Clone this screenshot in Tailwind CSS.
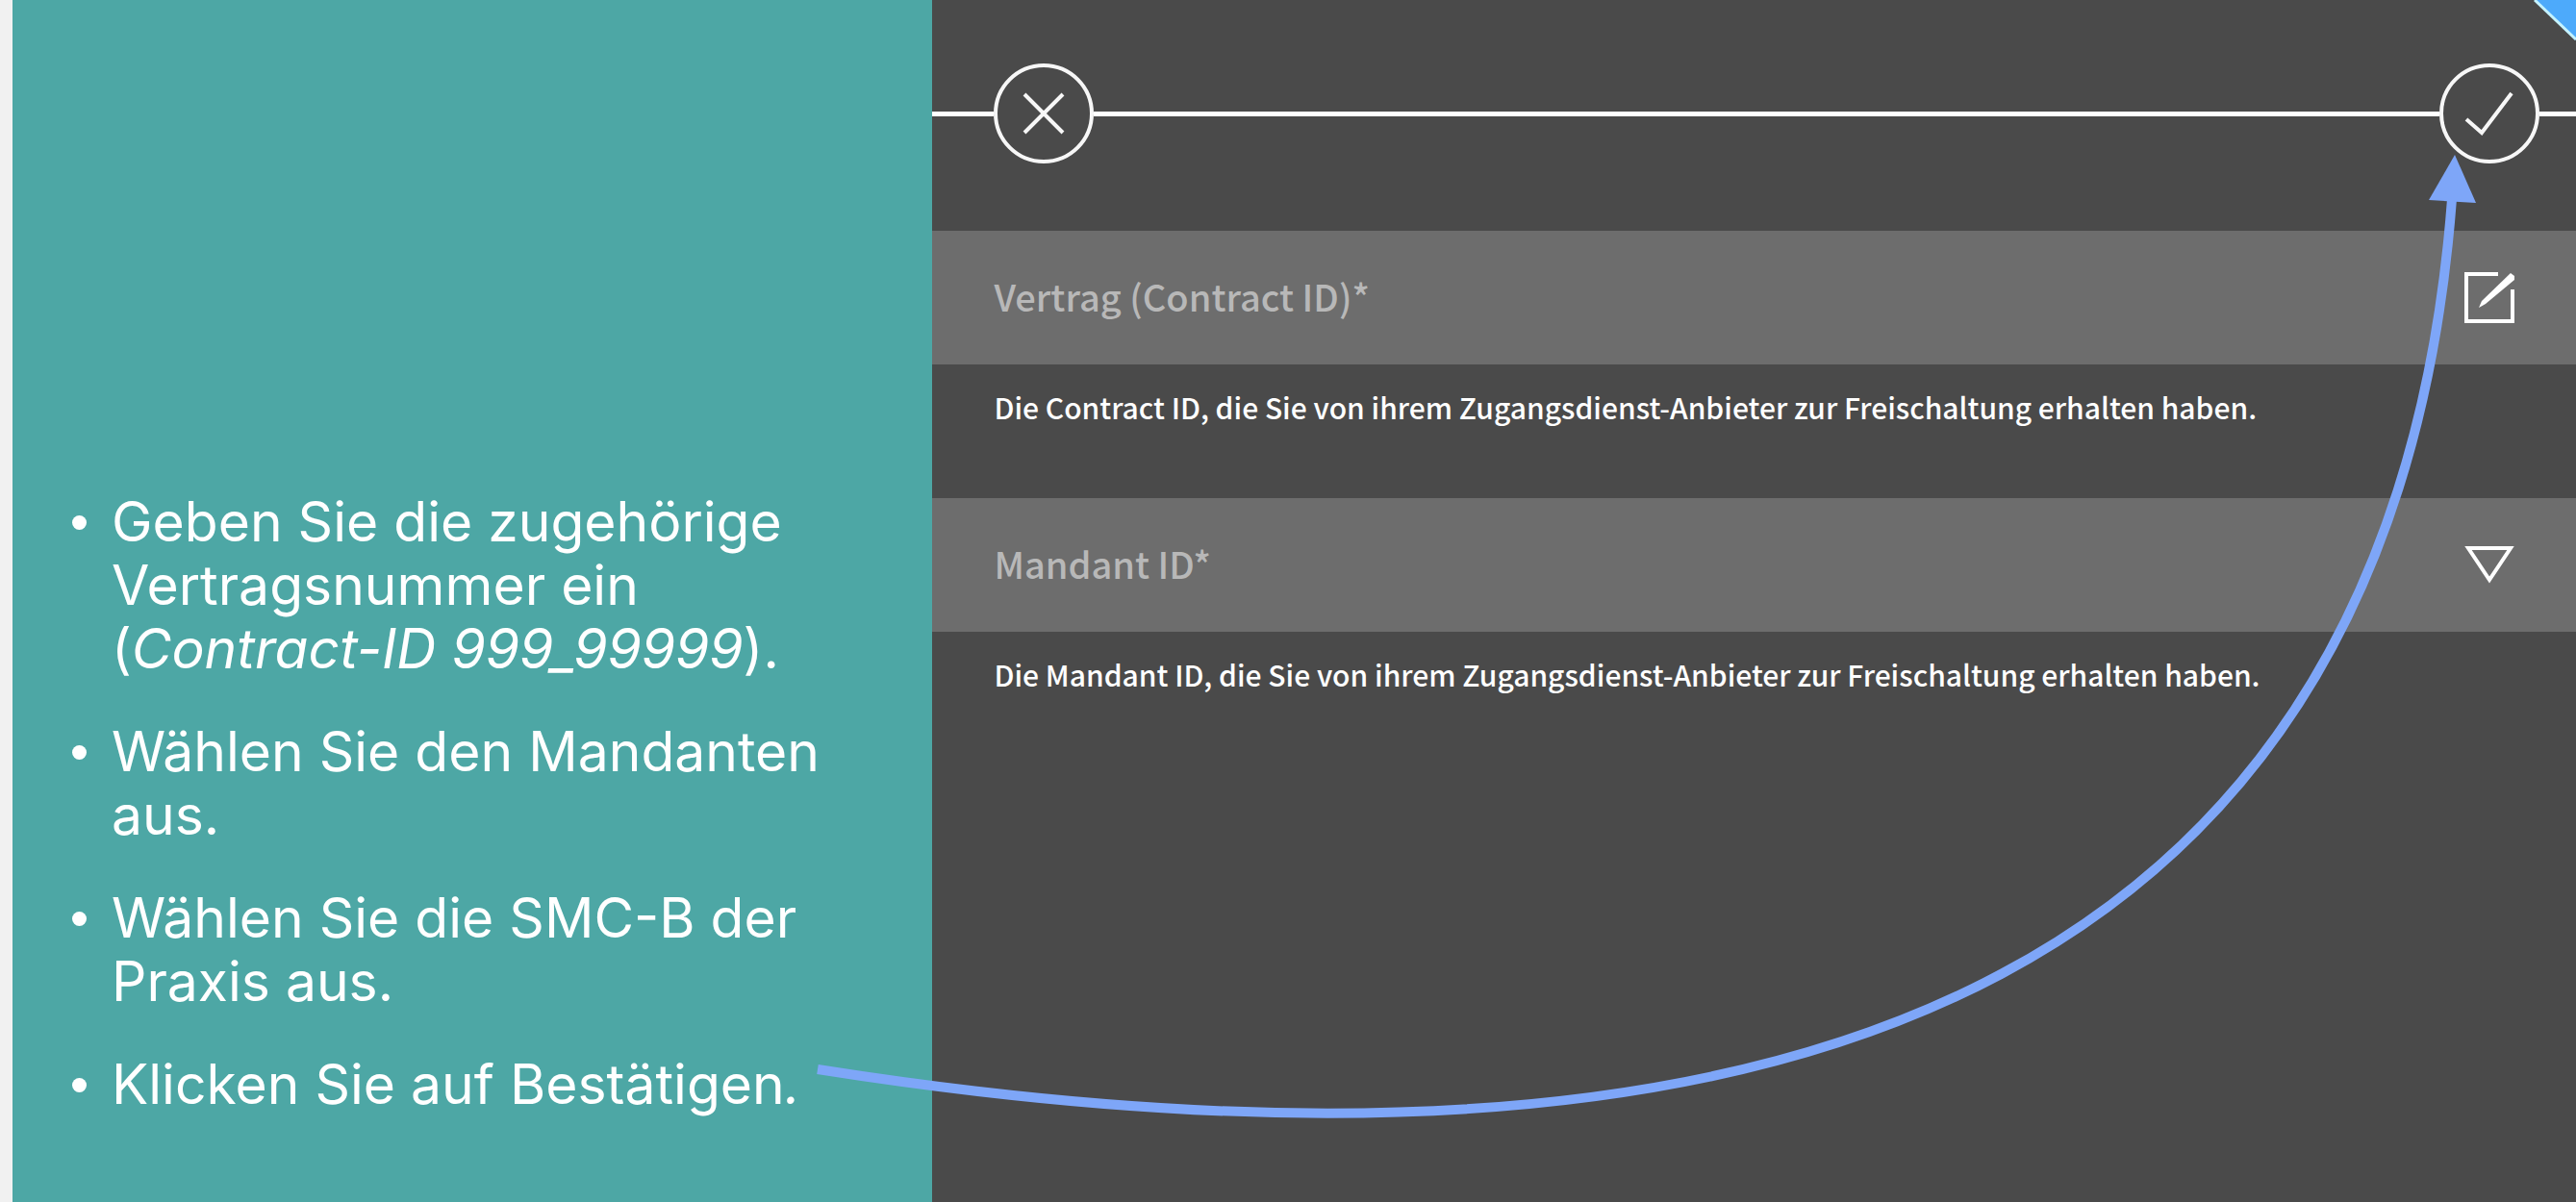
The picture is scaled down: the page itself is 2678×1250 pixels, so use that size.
<!DOCTYPE html>
<html lang="de">
<head>
<meta charset="utf-8">
<title>Vertrag und Mandant</title>
<script src="https://cdn.jsdelivr.net/npm/@tailwindcss/browser@4"></script>
</head>
<body class="relative flex min-h-screen overflow-x-hidden bg-[#4a4a4a] text-white">
  <aside class="flex w-[36.2%] shrink-0 flex-col justify-end border-l-[13px] border-[#f1f1f1] bg-[#4da7a5] pb-[89px] pl-[62px] pr-24 font-['Inter',sans-serif] text-[57px] leading-[66px]">
    <ul class="flex flex-col gap-[41px]">
      <li class="flex gap-[26px]"><span class="mt-[26px] size-[15px] shrink-0 rounded-full bg-white"></span><p>Geben Sie die zugehörige<br>Vertragsnummer ein<br>(<em>Contract-ID 999_99999</em>).</p></li>
      <li class="flex gap-[26px]"><span class="mt-[26px] size-[15px] shrink-0 rounded-full bg-white"></span><p class="whitespace-nowrap">Wählen Sie den Mandanten<br>aus.</p></li>
      <li class="flex gap-[26px]"><span class="mt-[26px] size-[15px] shrink-0 rounded-full bg-white"></span><p>Wählen Sie die SMC-B der<br>Praxis aus.</p></li>
      <li class="flex gap-[26px]"><span class="mt-[26px] size-[15px] shrink-0 rounded-full bg-white"></span><p class="whitespace-nowrap">Klicken Sie auf Bestätigen<em>.</em></p></li>
    </ul>
  </aside>

  <main class="min-w-0 flex-1 font-['Noto_Sans_CJK_JP',sans-serif] font-medium">
    <header class="flex h-[240px] items-center pb-1">
      <span class="h-[5px] w-16 bg-white"></span>
      <button type="button" aria-label="Abbrechen" class="size-[104px] shrink-0">
        <svg class="size-full" viewBox="0 0 104 104" fill="none" stroke="#f7f7f7" stroke-width="4"><circle cx="52" cy="52" r="50"/><path d="M32 32 72 72M72 32 32 72"/></svg>
      </button>
      <span class="h-[5px] flex-1 bg-white"></span>
      <button type="button" aria-label="Bestätigen" class="size-[104px] shrink-0">
        <svg class="size-full" viewBox="0 0 104 104" fill="none" stroke="#f7f7f7" stroke-width="4"><circle cx="52" cy="52" r="50"/><path d="M28 58 44 72 75 31"/></svg>
      </button>
      <span class="h-[5px] w-[38px] bg-white"></span>
    </header>

    <form>
      <div class="flex h-[139px] items-center bg-[#6d6d6d] pl-16 pr-16">
        <input id="contract" type="text" placeholder="Vertrag (Contract ID)*" class="h-full min-w-0 flex-1 bg-transparent pb-1 text-[38px] outline-none placeholder:text-[#b8b8b8]">
        <svg class="h-[53px] w-[52px] shrink-0" viewBox="0 0 52 53" fill="none" stroke="#fff" stroke-width="4"><path d="M35 2H2V51H50V18"/><path d="M48 1 52 4V8L22 33 15 37 18 30Z" fill="#fff" stroke="none"/></svg>
      </div>
      <label for="contract" class="flex h-[139px] pl-16 pt-5 text-[30px] leading-[48px]">Die Contract ID, die Sie von ihrem Zugangsdienst-Anbieter zur Freischaltung erhalten haben.</label>
      <div class="flex h-[139px] items-center bg-[#6d6d6d] pl-16 pr-16">
        <select id="mandant" class="h-full min-w-0 flex-1 appearance-none bg-transparent pb-1 text-[38px] text-[#b8b8b8] outline-none"><option>Mandant ID*</option></select>
        <svg class="h-[39px] w-[52px] shrink-0" viewBox="0 0 52 39" fill="none" stroke="#fff" stroke-width="4"><path d="M4 2H48L26 35Z"/></svg>
      </div>
      <label for="mandant" class="flex h-[139px] pl-16 pt-5 text-[30px] leading-[48px]">Die Mandant ID, die Sie von ihrem Zugangsdienst-Anbieter zur Freischaltung erhalten haben.</label>
    </form>
  </main>

  <!-- Corner ribbon -->
  <svg class="absolute right-0 top-0 h-[42px] w-[44px]" viewBox="0 0 44 42"><path d="M1 0H44V42Z" fill="#4daafb"/><path d="M1 0 44 41" stroke="#c5f3ff" stroke-width="3"/></svg>

  <!-- Arrow from the last step to the confirm button -->
  <svg class="pointer-events-none absolute inset-0 size-full" viewBox="0 0 2678 1250" preserveAspectRatio="none" fill="none">
    <path d="M850 1112Q2462 1366 2549 207" stroke="#7ea6f8" stroke-width="10"/>
    <path d="M2552 161 2574 211 2525 208Z" fill="#7ea6f8"/>
  </svg>
</body>
</html>
